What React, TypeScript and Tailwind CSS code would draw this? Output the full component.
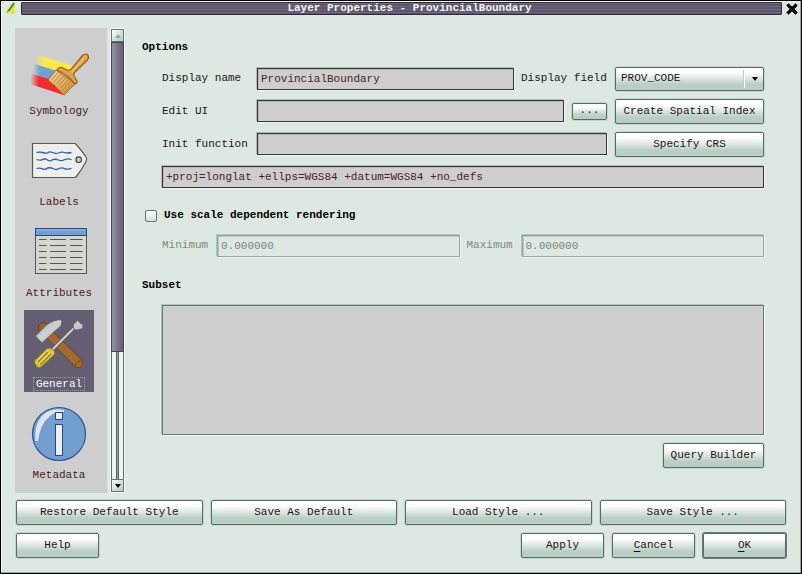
import type { ButtonHTMLAttributes, InputHTMLAttributes, ReactNode } from "react";

const focusRing = "outline-none focus-visible:ring-2 focus-visible:ring-[#6c6478]";

function PushButton({ className = "", children, ...rest }: ButtonHTMLAttributes<HTMLButtonElement>) {
  return (
    <button
      type="button"
      className={`rounded-[2px] border border-[#4f7062] bg-linear-to-b from-white from-20% via-[#dbe6e0] via-50% to-[#bacec5] to-75% pb-0.5 text-center whitespace-nowrap shadow-[0_0_0_1px_#c6d4cd] ${focusRing} ${className}`}
      {...rest}
    >
      {children}
    </button>
  );
}

function TextField({ className = "", ...rest }: InputHTMLAttributes<HTMLInputElement>) {
  return (
    <input
      type="text"
      className={`mt-px h-[22px] min-w-0 border border-[#3a3338] bg-[#cecece] px-[3px] text-[#4a2226] shadow-[-1px_-1px_0_#b4bab6,1px_1px_0_#f0f4f2,inset_1px_1px_0_#b8b5b7] outline-none disabled:border-[#8fa79c] disabled:bg-[#dee8e2] disabled:text-[#7d8581] disabled:shadow-[-1px_-1px_0_#b3c2ba,1px_1px_0_#f2f6f4,inset_1px_1px_0_#bdc8c2] ${className}`}
      {...rest}
    />
  );
}

function SymbologyIcon() {
  return (
    <svg viewBox="27 39 64 64" className="size-16" aria-hidden="true">
      <defs>
        <linearGradient id="fadeYellow" x1="0" x2="1">
          <stop offset="0" stopColor="#fde94f" stopOpacity="0" />
          <stop offset=".25" stopColor="#fde94f" />
        </linearGradient>
        <linearGradient id="fadeBlue" x1="0" x2="1">
          <stop offset="0" stopColor="#729fcf" stopOpacity="0" />
          <stop offset=".35" stopColor="#729fcf" />
        </linearGradient>
        <linearGradient id="fadeRed" x1="0" x2="1">
          <stop offset="0" stopColor="#f22c2c" stopOpacity="0" />
          <stop offset=".25" stopColor="#f22c2c" />
        </linearGradient>
        <linearGradient id="bristle" x1="0" y1="0" x2="1" y2="1">
          <stop offset="0" stopColor="#f2d9ac" />
          <stop offset="1" stopColor="#d18d2c" />
        </linearGradient>
      </defs>
      <path d="M38 55 L73 66 L68 74 L56 71 L35 64z" fill="url(#fadeYellow)" />
      <path d="M35 64 L57 71 L49 80 L32 74z" fill="url(#fadeBlue)" />
      <path d="M32 74 L49 79 L65 95.500 L30 84z" fill="url(#fadeRed)" />
      <path d="M56 70 L48 80 Q57 87 64 95 L75 84z" fill="url(#bristle)" stroke="#a8681a" />
      <path d="M51 80.500 l8-9 M53.500 82.500 l8-9 M56 84.500 l8-9 M58 86.500 l8-9 M60.500 88.500 l8-9 M62 91 l8-9 M64 93 l8-9" stroke="#a8681a" strokeWidth=".7" />
      <path d="M57 70 Q59 66 63 68 L67 70 Q70 71 72 68 L82 56 Q85 53 87.500 54.500 Q89.500 57 87.500 60 L76 71 Q73 74 74 76 L77 81 Q77 84 75 84 Q68 75 57 70z" fill="#dfa047" stroke="#95601a" strokeWidth="1.200" />
      <path d="M72 72 L85 57" stroke="#f0c17b" strokeWidth="1.500" strokeLinecap="round" />
    </svg>
  );
}

function LabelsIcon() {
  return (
    <svg viewBox="27 130 64 64" className="size-16" fill="none" aria-hidden="true">
      <path d="M32.500 143.500 H75 Q79 147 86 157 Q87.500 159 86 161.500 Q81 171 75.500 177.500 H32.500z" fill="#eeeeec" stroke="#555753" strokeWidth="1.200" />
      <circle cx="78.700" cy="159.700" r="2.800" fill="#c8cac8" stroke="#3f4444" strokeWidth="1.200" />
      <g stroke="#3465a4" strokeWidth="1.300">
        <path d="M36.500 152.500 q3-.8 6 0 t5 .5 q2-2 5-.5 t6 .5 q3-1.500 6-.5 t7 0" />
        <path d="M36.500 159.500 q3 1 5 .5 q3-2 6 0 t5-.3 q3-1 6 .3 t6-.3 t7 0" />
        <path d="M36.500 168.500 q3-1 6 .3 t5-.8 q3-.8 6 .8 t6-.5 q3-1 5 .3 t7-.3" />
      </g>
    </svg>
  );
}

function AttributesIcon() {
  return (
    <svg viewBox="27 221 64 64" className="size-16" aria-hidden="true">
      <rect x="35.500" y="229.500" width="51" height="44" fill="#d3d7cf" stroke="#555753" />
      <rect x="35.500" y="228.500" width="51" height="7" fill="#729fcf" stroke="#204a87" />
      <path d="M37 230 H85" stroke="#9dbce0" />
      <path
        d="M39 239.500 H83 M39 245.500 H83 M39 251.500 H83 M39 257.500 H83 M39 263.500 H83 M39 269.500 H83"
        stroke="#555753"
        strokeDasharray="7.500 3.500 16 4 12.500 10"
      />
    </svg>
  );
}

function GeneralIcon() {
  return (
    <svg viewBox="27 312 64 64" className="size-16" aria-hidden="true">
      <defs>
        <linearGradient id="steel" x1="0" y1="0" x2="1" y2="1">
          <stop offset="0" stopColor="#a8a8ac" />
          <stop offset=".5" stopColor="#d2d2d4" />
          <stop offset="1" stopColor="#98989c" />
        </linearGradient>
      </defs>
      <path d="M38.500 331 Q37 325 42 322.500 L45 322 L47 326 L41 331z" fill="#96602a" stroke="#6c4211" />
      <path d="M47 338 L53 332 L82 360 Q84 363 82 365.500 Q80 368.500 76 367.500z" fill="#a06a32" stroke="#704514" />
      <path d="M75 366 Q76 361 82 361" fill="none" stroke="#704514" />
      <path d="M35.500 336 L47 324.500 Q53 320 60 319.500 L62 321.500 L61 326 L54 332 L42 343z" fill="url(#steel)" stroke="#63636b" />
      <path d="M52 350 L74 328" stroke="#5b5b64" strokeWidth="3.600" />
      <path d="M52 350 L75 327" stroke="#d5d5d8" strokeWidth="1.800" />
      <path d="M73.500 329 L73.500 324.500 L77.500 320.500 L83 325.500 L82.500 328.500 L77 330z" fill="#c9c9cc" stroke="#74747c" />
      <path d="M34.500 363 Q34 361 36 359.500 L47 348.500 Q50 347 53 349.500 Q56 352 54 355 L42 366 Q40 369 37 367z" fill="#dcc64a" stroke="#8d7711" />
      <path d="M38 362 L48 352 M40 365 L51 354" stroke="#937d15" strokeWidth="1.200" />
      <path d="M37 360.500 L48 350 M39 363.500 L50 353" stroke="#f5e589" />
    </svg>
  );
}

function MetadataIcon() {
  return (
    <svg viewBox="27 403 64 64" className="size-16" aria-hidden="true">
      <circle cx="59" cy="434" r="26.500" fill="#729fcf" stroke="#2f5691" strokeWidth="1.200" />
      <path d="M64 410 Q50 407 41 417 Q34 426 35.500 441 H38 Q40 424 50 416 Q57 411 64 412z" fill="#dce5ee" />
      <rect x="55.500" y="412.500" width="7" height="7" fill="#eeeeec" stroke="#204a87" />
      <rect x="55.500" y="424.500" width="7" height="31" fill="#eeeeec" stroke="#204a87" />
    </svg>
  );
}

const pages: { name: string; icon: ReactNode }[] = [
  { name: "Symbology", icon: <SymbologyIcon /> },
  { name: "Labels", icon: <LabelsIcon /> },
  { name: "Attributes", icon: <AttributesIcon /> },
  { name: "General", icon: <GeneralIcon /> },
  { name: "Metadata", icon: <MetadataIcon /> },
];

function TitleBar() {
  return (
    <header className="flex h-[15px] items-start pt-px">
      <svg viewBox="0 0 20 14" className="h-3.5 w-5 shrink-0" aria-hidden="true">
        <path d="M5 11 Q4 8 6 4 L10 0 H14.500 V11 L10 12z" fill="#e6efb8" />
        <path d="M9 11.500 Q9 6 12 3.500 L14 2 V6 L12 9 L14.500 8.500 V11 L11 12z" fill="#dfe04a" />
        <path d="M6 11 L7.500 8" stroke="#a9bf2f" strokeWidth="2" />
        <path d="M7.500 9 L13 1" stroke="#3f8a33" strokeWidth="2" />
      </svg>
      <h1 className="h-[13px] min-w-0 flex-1 truncate rounded-[1px] border border-[#2f2938] bg-[#625a6e] bg-[repeating-linear-gradient(#6f677b_0_1px,#5d5569_1px_3px)] pl-4 text-center text-[11px] leading-[11px] font-bold text-[#f0f2f0]">
        Layer Properties - ProvincialBoundary
      </h1>
      <button type="button" aria-label="Close" className="flex w-[19px] shrink-0 justify-center pt-px">
        <svg viewBox="0 0 12 12" className="size-3" aria-hidden="true">
          <path d="M2.500 2.500 L9.500 9.500 M9.500 2.500 L2.500 9.500" stroke="#000" strokeWidth="3.200" strokeLinecap="square" />
        </svg>
      </button>
    </header>
  );
}

function PageList() {
  return (
    <nav aria-label="Pages" className="flex w-[92px] flex-col gap-[9px] bg-[#cecece] pt-[9px] pb-2.5 pl-[9px]">
      {pages.map(({ name, icon }) => {
        const active = name === "General";
        return (
          <button
            key={name}
            type="button"
            aria-current={active ? "page" : undefined}
            className={`flex h-[82px] w-[70px] flex-col items-center pt-0.5 ${active ? "bg-[#655d72] text-white" : "text-[#4a1a20]"}`}
          >
            {icon}
            <span
              className={`mt-px border border-dotted px-0.5 leading-[12px] ${active ? "border-[#98a58f]" : "border-transparent"}`}
            >
              {name}
            </span>
          </button>
        );
      })}
    </nav>
  );
}

function ScrollBar() {
  const arrow =
    "flex h-[13px] shrink-0 items-center justify-center border border-[#5d7a6d] bg-linear-to-br from-white to-[#b3c8be]";
  return (
    <div className="my-px ml-1 flex w-[13px] flex-col shadow-[0_0_0_1px_#f4f8f6]">
      <button type="button" aria-label="Scroll up" className={arrow}>
        <svg viewBox="0 0 6 4" className="h-1 w-1.5" aria-hidden="true">
          <path d="M3 0 L6 4 H0z" fill="#8aa498" />
        </svg>
      </button>
      <div className="flex flex-1 flex-col border-x border-[#5f6b66] bg-[#f0f3f1]">
        <div className="-mx-px h-[310px] border border-[#4a4356] bg-linear-to-r from-[#9890a6] to-[#655d73]" />
        <div className="mx-auto w-[3px] flex-1 border-x border-[#4f6b60] bg-[#8aa397]" />
      </div>
      <button type="button" aria-label="Scroll down" className={arrow}>
        <svg viewBox="0 0 6 4" className="h-1 w-1.5" aria-hidden="true">
          <path d="M0 0 H6 L3 4z" fill="#000" />
        </svg>
      </button>
    </div>
  );
}

export default function App() {
  return (
    <div className="flex min-h-screen flex-col border border-black bg-[#dee8e2] font-['Liberation_Mono',monospace] text-[11px] leading-[14px] text-[#1a1416] shadow-[inset_-1px_-1px_0_#8fa99d,inset_1px_1px_0_#f6faf8]">
      <TitleBar />
      <main className="flex px-3.5 pt-3">
        <PageList />
        <ScrollBar />

        <div className="min-w-0 flex-1 pt-3 pr-[23px] pl-[18px]">
          <h2 className="font-bold text-black">Options</h2>

          <div className="mt-[13px] flex flex-col gap-2 pl-5">
            <div className="flex h-6">
              <label htmlFor="display-name" className="w-[95px] shrink-0 pt-1">
                Display name
              </label>
              <TextField id="display-name" defaultValue="ProvincialBoundary" className="flex-1" />
              <label htmlFor="display-field" className="w-[101px] shrink-0 pt-1 pl-[7px]">
                Display field
              </label>
              <div className="relative w-[149px] shrink-0">
                <select
                  id="display-field"
                  defaultValue="PROV_CODE"
                  className={`h-6 w-full appearance-none rounded-[2px] border border-[#4f7062] bg-linear-to-b from-white from-20% via-[#dbe6e0] via-50% to-[#bacec5] to-75% pb-[3px] pl-[5px] shadow-[0_0_0_1px_#c6d4cd] ${focusRing}`}
                >
                  <option>PROV_CODE</option>
                </select>
                <span className="pointer-events-none absolute inset-y-[3px] right-0 flex w-5 items-center justify-center border-l border-white shadow-[-1px_0_0_#bccfc6]">
                  <svg viewBox="0 0 6 4" className="h-1 w-1.5" aria-hidden="true">
                    <path d="M0 0 H6 L3 4z" fill="#000" />
                  </svg>
                </span>
              </div>
            </div>

            <div className="flex h-[25px]">
              <label htmlFor="edit-ui" className="w-[95px] shrink-0 pt-[5px]">
                Edit UI
              </label>
              <TextField id="edit-ui" className="flex-1" />
              <PushButton className="mx-2 h-[17px] w-[35px] shrink-0 self-center leading-[11px]" aria-label="Browse for edit UI">
                ...
              </PushButton>
              <PushButton className="w-[149px] shrink-0">Create Spatial Index</PushButton>
            </div>

            <div className="flex h-[25px]">
              <label htmlFor="init-function" className="w-[95px] shrink-0 pt-[5px]">
                Init function
              </label>
              <TextField id="init-function" className="mr-2 flex-1" />
              <PushButton className="w-[149px] shrink-0">Specify CRS</PushButton>
            </div>

            <TextField
              readOnly
              aria-label="Coordinate reference system"
              defaultValue="+proj=longlat +ellps=WGS84 +datum=WGS84 +no_defs"
              className="-mt-px w-full"
            />
          </div>

          <label className="mt-5 ml-[3px] flex gap-[7px] font-bold text-black">
            <input
              type="checkbox"
              className="mt-0.5 size-3 appearance-none rounded-[2px] border border-[#5d7a6d] bg-linear-to-b from-white to-[#d3dfd9] checked:bg-[#6c6478]"
            />
            Use scale dependent rendering
          </label>

          <div className="mt-3 flex pl-5 text-[#7f8783]">
            <label htmlFor="minimum" className="w-[55px] shrink-0 pt-1">
              Minimum
            </label>
            <TextField id="minimum" disabled defaultValue="0.000000" className="flex-1" />
            <label htmlFor="maximum" className="w-[62px] shrink-0 pt-1 pl-[7px]">
              Maximum
            </label>
            <TextField id="maximum" disabled defaultValue="0.000000" className="flex-1" />
          </div>

          <h2 className="mt-[21px] font-bold text-black">Subset</h2>
          <div className="mt-[13px] flex flex-col items-end gap-2 pl-5">
            <textarea
              aria-label="Subset"
              readOnly
              className="block h-[130px] w-full resize-none border border-[#5f7a6e] bg-[#cecece] px-1 text-[#4a2226] shadow-[-1px_-1px_0_#b0beb6,1px_1px_0_#f2f6f4] outline-none"
            />
            <PushButton className="h-[25px] w-[101px]">Query Builder</PushButton>
          </div>
        </div>
      </main>

      <footer className="flex flex-col gap-2 px-[15px] pt-[7px] pb-3.5">
        <div className="grid grid-cols-4 gap-2">
          <PushButton className="h-[25px]">Restore Default Style</PushButton>
          <PushButton className="h-[25px]">Save As Default</PushButton>
          <PushButton className="h-[25px]">Load Style ...</PushButton>
          <PushButton className="h-[25px]">Save Style ...</PushButton>
        </div>
        <div className="flex gap-2">
          <PushButton className="mr-auto h-[25px] w-[83px]">Help</PushButton>
          <PushButton className="h-[25px] w-[83px]">Apply</PushButton>
          <PushButton className="h-[25px] w-[83px]">
            <span className="underline underline-offset-3">C</span>ancel
          </PushButton>
          <PushButton className="h-[25px] w-[83px] ring-1 ring-[#77727f]">
            <span className="underline underline-offset-3">O</span>K
          </PushButton>
        </div>
      </footer>
    </div>
  );
}
